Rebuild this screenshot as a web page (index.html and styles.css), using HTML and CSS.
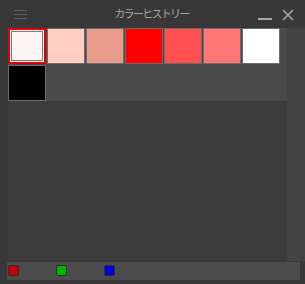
FILE: index.html
```html
<!DOCTYPE html>
<html lang="ja">
<head>
  <meta charset="UTF-8">
  <title>カラーヒストリー</title>
  <link rel="stylesheet" href="styles.css">
</head>
<body>
  <div class="window">
    <div class="titlebar">
      <div class="menu-btn">
        <span></span><span></span><span></span>
      </div>
      <div class="title">カラーヒストリー</div>
      <div class="win-btns">
        <span class="min-btn"></span>
        <svg class="close-btn" width="12" height="12" viewBox="0 0 12 12">
          <path d="M1 1 L11 11 M11 1 L1 11" stroke="#a9a9a9" stroke-width="1.6" fill="none"/>
        </svg>
      </div>
    </div>

    <div class="main">
      <div class="palette">
        <div class="swatch-grid">
          <div class="swatch selected" style="background:#fff5f3"></div>
          <div class="swatch" style="background:#ffcdc2"></div>
          <div class="swatch" style="background:#e99c8c"></div>
          <div class="swatch" style="background:#ff0000"></div>
          <div class="swatch" style="background:#ff4f4f"></div>
          <div class="swatch" style="background:#ff7676"></div>
          <div class="swatch" style="background:#ffffff"></div>
          <div class="swatch" style="background:#000000"></div>
        </div>
      </div>
      <div class="scrollbar"></div>
    </div>

    <div class="footer">
      <span class="mini red"></span>
      <span class="mini green"></span>
      <span class="mini blue"></span>
    </div>
  </div>
</body>
</html>
```

FILE: styles.css
```css
body {
  margin: 0;
  background-color: #383838;
  font-family: "Noto Sans CJK JP", "Noto Sans", sans-serif;
}
.window {
  width: 305px;
  height: 284px;
  display: flex;
  flex-direction: column;
}
.titlebar {
  height: 28px;
  display: flex;
  align-items: flex-start;
}
.menu-btn {
  display: flex;
  flex-direction: column;
  gap: 3px;
  margin: 10px 0 0 14px;
}
.menu-btn span {
  display: block;
  width: 13px;
  height: 1px;
  background-color: #5e5e5e;
}
.title {
  flex: 1;
  text-align: center;
  color: #a4a4a4;
  font-size: 11px;
  letter-spacing: -1.7px;
  line-height: 14px;
  margin-top: 6px;
  padding-left: 18px;
}
.win-btns {
  display: flex;
  align-items: flex-start;
  gap: 10px;
  margin: 9px 11px 0 0;
}
.min-btn {
  display: block;
  width: 14px;
  height: 2px;
  margin-top: 9px;
  background-color: #a9a9a9;
}
.main {
  height: 233px;
  display: flex;
  margin-left: 8px;
}
.palette {
  flex: 1;
  background-color: #3c3c3c;
}
.swatch-grid {
  display: grid;
  grid-template-columns: repeat(7, 38px);
  grid-auto-rows: 36px;
  column-gap: 1px;
  row-gap: 1px;
  background-color: #4a4a4a;
}
.swatch {
  box-sizing: border-box;
  border: 1px solid #6c6c6c;
}
.swatch.selected {
  border: 2px solid #e30000;
  box-shadow: inset 0 0 0 1px #fff5f3, inset 0 0 0 2px #7a7a7a;
}
.scrollbar {
  width: 18px;
  background-color: #434343;
}
.footer {
  height: 18px;
  margin: 1px 5px 0 7px;
  background-color: #4b4b4b;
  display: flex;
  align-items: flex-start;
  gap: 37px;
  padding: 3px 0 0 1px;
  box-sizing: border-box;
}
.mini {
  display: block;
  width: 11px;
  height: 11px;
  box-sizing: border-box;
  border: 1px solid #2e2e2e;
  border-radius: 2px;
}
.mini.red {
  background-color: #c40000;
}
.mini.green {
  background-color: #00b400;
}
.mini.blue {
  background-color: #0000e0;
}
```
